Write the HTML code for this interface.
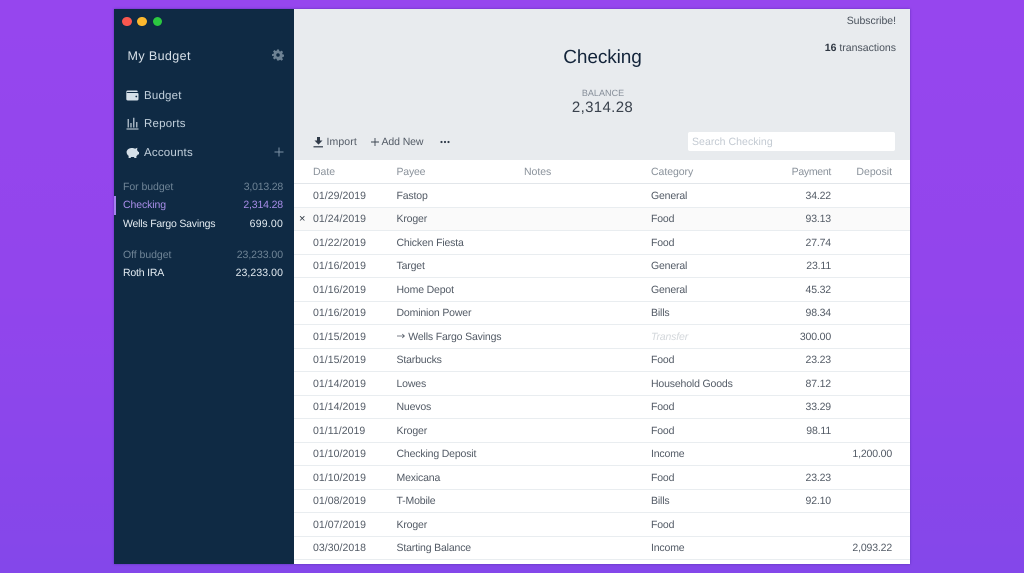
<!DOCTYPE html>
<html><head><meta charset="utf-8"><style>
html,body{margin:0;padding:0;width:1024px;height:573px;overflow:hidden}
body{position:relative;background:linear-gradient(180deg,#9646ee 0%,#9245ec 50%,#8447ea 100%);font-family:"Liberation Sans",sans-serif;font-size:10.5px;letter-spacing:-.16px;text-rendering:geometricPrecision}
#all{position:absolute;left:0;top:0;width:1024px;height:573px;filter:blur(.25px)}
.a{position:absolute;white-space:nowrap;line-height:14px}
.r{text-align:right}
.d{letter-spacing:.05px}
#w{position:absolute;left:114px;top:9px;width:796px;height:555px;background:#fff;overflow:hidden;box-shadow:0 0 2px rgba(40,30,120,.5)}
#s{position:absolute;left:114px;top:9px;width:180px;height:555px;background:#0f2a44}
#h{position:absolute;left:294px;top:9px;width:616px;height:151px;background:#e8ebee}
.l{position:absolute;left:294px;width:616px;height:1px;background:#e9edf0}
.t{color:#525a65}
.hd{color:#8a929b;letter-spacing:-.05px}
.sb{color:#c2d0dc}
.g{color:#6f8496;letter-spacing:-.05px}
.wt{color:#e4ecf2;letter-spacing:-.2px}
.p{color:#a88de8;letter-spacing:-.1px}
</style></head><body><div id="all">
<div id="w"></div><div id="s"></div><div id="h"></div>

<!-- traffic lights -->
<div class="a" style="left:122.300px;top:16.700px;width:9.400px;height:9.400px;border-radius:50%;background:#f9574f"></div>
<div class="a" style="left:137.300px;top:16.700px;width:9.400px;height:9.400px;border-radius:50%;background:#fcb82e"></div>
<div class="a" style="left:152.700px;top:16.700px;width:9.400px;height:9.400px;border-radius:50%;background:#2bc840"></div>

<!-- sidebar -->
<div class="a" style="left:127.500px;top:47.500px;font-size:12.500px;line-height:16px;color:#d7e0e8;letter-spacing:.4px">My Budget</div>
<svg class="a" style="left:271.500px;top:49px" width="12" height="12" viewBox="0 0 24 24"><path fill="#6d8294" fill-rule="evenodd" d="M10 1h4l.6 3.200 2 .8L19.300 3.200l2.800 2.800-1.800 2.700.8 2 3.100.6v4l-3.200.6-.8 2 1.900 2.700-2.800 2.800-2.700-1.900-2 .8L14 23h-4l-.6-3.200-2-.8-2.700 1.900-2.800-2.800 1.900-2.700-.8-2L0 14.200v-4l3.200-.6.800-2-1.900-2.700L4.900 2.100l2.700 1.900 2-.8zM12 8.500a3.500 3.500 0 1 0 0 7 3.500 3.500 0 0 0 0-7z"/></svg>

<svg class="a" style="left:126px;top:90px" width="13" height="11" viewBox="0 0 13 11"><path fill="#d5e0e9" d="M1.800.5h8.700q1.200 0 1.200 1.200v.3H1.600q-.9 0-.9.5t.9.5h9.900q1 0 1 1v5q0 1.500-1.500 1.500H2Q.3 10.500.3 9V2Q.3.500 1.800.5z"/><circle cx="10.300" cy="6.500" r=".9" fill="#0f2a44"/></svg>
<div class="a sb" style="left:144px;top:89px;font-size:11.500px;letter-spacing:.2px">Budget</div>

<svg class="a" style="left:126px;top:116.500px" width="13" height="13" viewBox="0 0 13 13"><path fill="none" stroke="#d5e0e9" stroke-width="1.100" d="M.5 12h12M2.200 10.500V2M5 10.500V6M7.800 10.500V.8M10.800 10.500V5"/></svg>
<div class="a sb" style="left:144px;top:117px;font-size:11.500px;letter-spacing:.2px">Reports</div>

<svg class="a" style="left:126px;top:146.500px" width="13" height="12" viewBox="0 0 13 12"><path fill="#d5e0e9" d="M.6 4.500C1.200 2.300 3.500 1 6 1c1.200 0 2.300.3 3 .7L11.400.8l-.4 2.300c.6.500 1 1.200 1.200 1.800h.8v2.400l-1.300.3c-.3.600-.8 1.100-1.300 1.500V11H8.400l-.4-1H5l-.4 1H2.600V8.800C1.400 8 .4 6.500.6 4.500z"/></svg>
<div class="a sb" style="left:144px;top:146px;font-size:11.500px;letter-spacing:.2px">Accounts</div>
<svg class="a" style="left:273.500px;top:146.500px" width="10" height="10" viewBox="0 0 10 10"><path stroke="#7d93a6" stroke-width="1" d="M5 .5v9M.5 5h9"/></svg>

<div class="a g" style="left:123px;top:180px">For budget</div>
<div class="a g r" style="right:741px;top:180px;letter-spacing:-.2px">3,013.28</div>
<div class="a" style="left:114px;top:196px;width:2px;height:18.500px;background:#a582ee"></div>
<div class="a p" style="left:123px;top:198px">Checking</div>
<div class="a p r" style="right:741px;top:198px;letter-spacing:-.15px">2,314.28</div>
<div class="a wt" style="left:123px;top:217px">Wells Fargo Savings</div>
<div class="a wt r" style="right:741px;top:217px;letter-spacing:.2px">699.00</div>
<div class="a g" style="left:123px;top:248px">Off budget</div>
<div class="a g r" style="right:741px;top:248px">23,233.00</div>
<div class="a wt" style="left:123px;top:266px">Roth IRA</div>
<div class="a wt r" style="right:741px;top:266px;letter-spacing:.08px">23,233.00</div>

<!-- header -->
<div class="a r" style="right:128px;top:14px;color:#4a525c;letter-spacing:-.03px">Subscribe!</div>
<div class="a r" style="right:128px;top:41px;color:#4a525c;letter-spacing:0"><b style="color:#2f3742">16</b> transactions</div>
<div class="a" style="left:294.500px;width:616px;top:46px;text-align:center;font-size:19px;line-height:24px;color:#13243a;letter-spacing:-.1px">Checking</div>
<div class="a" style="left:295px;width:616px;top:86px;text-align:center;font-size:9px;color:#858d98;letter-spacing:.05px">BALANCE</div>
<div class="a" style="left:294.500px;width:616px;top:98.500px;text-align:center;font-size:15px;line-height:18px;color:#3a424d;letter-spacing:.35px">2,314.28</div>

<svg class="a" style="left:313px;top:137px" width="11" height="11" viewBox="0 0 11 11"><path fill="#2f3a48" d="M4 0h3v3.500h2.500L5.500 7.600 1.500 3.500H4z"/><path stroke="#2f3a48" stroke-width="1.200" d="M.5 9.800h9.500"/></svg>
<div class="a t" style="left:326.500px;top:135px;letter-spacing:.1px">Import</div>
<svg class="a" style="left:371.300px;top:137.500px" width="8" height="8" viewBox="0 0 8 8"><path stroke="#3a4450" stroke-width=".9" d="M4 0v8M0 4h8"/></svg>
<div class="a t" style="left:381.500px;top:135px;letter-spacing:-.1px">Add New</div>
<svg class="a" style="left:439.500px;top:139.500px" width="10" height="4" viewBox="0 0 10 4"><circle cx="1.500" cy="2" r="1.100" fill="#2f3a48"/><circle cx="5" cy="2" r="1.100" fill="#2f3a48"/><circle cx="8.500" cy="2" r="1.100" fill="#2f3a48"/></svg>
<div class="a" style="left:688px;top:132px;width:207px;height:19px;background:#fff;border-radius:2px"></div>
<div class="a" style="left:692px;top:135px;color:#c3cad2;letter-spacing:.05px">Search Checking</div>

<!-- table header -->
<div class="a hd" style="left:313px;top:165px">Date</div>
<div class="a hd" style="left:396.500px;top:165px;letter-spacing:-.2px">Payee</div>
<div class="a hd" style="left:524px;top:165px">Notes</div>
<div class="a hd" style="left:651px;top:165px">Category</div>
<div class="a hd r" style="right:193px;top:165px;letter-spacing:-.3px">Payment</div>
<div class="a hd r" style="right:132px;top:165px;letter-spacing:0">Deposit</div>
<div class="l" style="top:183px;background:#e2e6ea"></div>

<div class="a" style="left:294px;top:207px;width:616px;height:23px;background:#fafafa"></div>
<div class="a" style="left:299px;top:212px;color:#2f3742;font-size:11px">×</div>

<div class="l" style="top:207px"></div><div class="l" style="top:230px"></div><div class="l" style="top:254px"></div><div class="l" style="top:277px"></div><div class="l" style="top:301px"></div><div class="l" style="top:324px"></div><div class="l" style="top:348px"></div><div class="l" style="top:371px"></div><div class="l" style="top:395px"></div><div class="l" style="top:418px"></div><div class="l" style="top:442px"></div><div class="l" style="top:465px"></div><div class="l" style="top:489px"></div><div class="l" style="top:512px"></div><div class="l" style="top:536px"></div><div class="l" style="top:559px"></div>

<div class="t">
<div class="a d" style="left:313px;top:188.500px">01/29/2019</div><div class="a" style="left:396.500px;top:188.500px">Fastop</div><div class="a" style="left:651px;top:188.500px">General</div><div class="a r" style="right:193px;top:188.500px">34.22</div>
<div class="a d" style="left:313px;top:212px">01/24/2019</div><div class="a" style="left:396.500px;top:212px">Kroger</div><div class="a" style="left:651px;top:212px">Food</div><div class="a r" style="right:193px;top:212px">93.13</div>
<div class="a d" style="left:313px;top:235.500px">01/22/2019</div><div class="a" style="left:396.500px;top:235.500px">Chicken Fiesta</div><div class="a" style="left:651px;top:235.500px">Food</div><div class="a r" style="right:193px;top:235.500px">27.74</div>
<div class="a d" style="left:313px;top:259px">01/16/2019</div><div class="a" style="left:396.500px;top:259px">Target</div><div class="a" style="left:651px;top:259px">General</div><div class="a r" style="right:193px;top:259px">23.11</div>
<div class="a d" style="left:313px;top:282.500px">01/16/2019</div><div class="a" style="left:396.500px;top:282.500px">Home Depot</div><div class="a" style="left:651px;top:282.500px">General</div><div class="a r" style="right:193px;top:282.500px">45.32</div>
<div class="a d" style="left:313px;top:306px">01/16/2019</div><div class="a" style="left:396.500px;top:306px">Dominion Power</div><div class="a" style="left:651px;top:306px">Bills</div><div class="a r" style="right:193px;top:306px">98.34</div>
<div class="a d" style="left:313px;top:329.500px">01/15/2019</div><svg class="a" style="left:397px;top:333px" width="8" height="6" viewBox="0 0 8 6"><path fill="none" stroke="#525a65" stroke-width=".8" d="M0 3h7.300M5.200 1l2.200 2-2.200 2"/></svg><div class="a" style="left:408.300px;top:329.500px">Wells Fargo Savings</div><div class="a" style="left:651px;top:329.500px;color:#d3d7db;font-style:italic">Transfer</div><div class="a r" style="right:193px;top:329.500px">300.00</div>
<div class="a d" style="left:313px;top:353px">01/15/2019</div><div class="a" style="left:396.500px;top:353px">Starbucks</div><div class="a" style="left:651px;top:353px">Food</div><div class="a r" style="right:193px;top:353px">23.23</div>
<div class="a d" style="left:313px;top:376.500px">01/14/2019</div><div class="a" style="left:396.500px;top:376.500px">Lowes</div><div class="a" style="left:651px;top:376.500px">Household Goods</div><div class="a r" style="right:193px;top:376.500px">87.12</div>
<div class="a d" style="left:313px;top:400px">01/14/2019</div><div class="a" style="left:396.500px;top:400px">Nuevos</div><div class="a" style="left:651px;top:400px">Food</div><div class="a r" style="right:193px;top:400px">33.29</div>
<div class="a d" style="left:313px;top:423.500px">01/11/2019</div><div class="a" style="left:396.500px;top:423.500px">Kroger</div><div class="a" style="left:651px;top:423.500px">Food</div><div class="a r" style="right:193px;top:423.500px">98.11</div>
<div class="a d" style="left:313px;top:447px">01/10/2019</div><div class="a" style="left:396.500px;top:447px">Checking Deposit</div><div class="a" style="left:651px;top:447px">Income</div><div class="a r" style="right:132px;top:447px">1,200.00</div>
<div class="a d" style="left:313px;top:470.500px">01/10/2019</div><div class="a" style="left:396.500px;top:470.500px">Mexicana</div><div class="a" style="left:651px;top:470.500px">Food</div><div class="a r" style="right:193px;top:470.500px">23.23</div>
<div class="a d" style="left:313px;top:494px">01/08/2019</div><div class="a" style="left:396.500px;top:494px">T-Mobile</div><div class="a" style="left:651px;top:494px">Bills</div><div class="a r" style="right:193px;top:494px">92.10</div>
<div class="a d" style="left:313px;top:517.500px">01/07/2019</div><div class="a" style="left:396.500px;top:517.500px">Kroger</div><div class="a" style="left:651px;top:517.500px">Food</div>
<div class="a d" style="left:313px;top:541px">03/30/2018</div><div class="a" style="left:396.500px;top:541px">Starting Balance</div><div class="a" style="left:651px;top:541px">Income</div><div class="a r" style="right:132px;top:541px">2,093.22</div>
</div>
</div></body></html>
